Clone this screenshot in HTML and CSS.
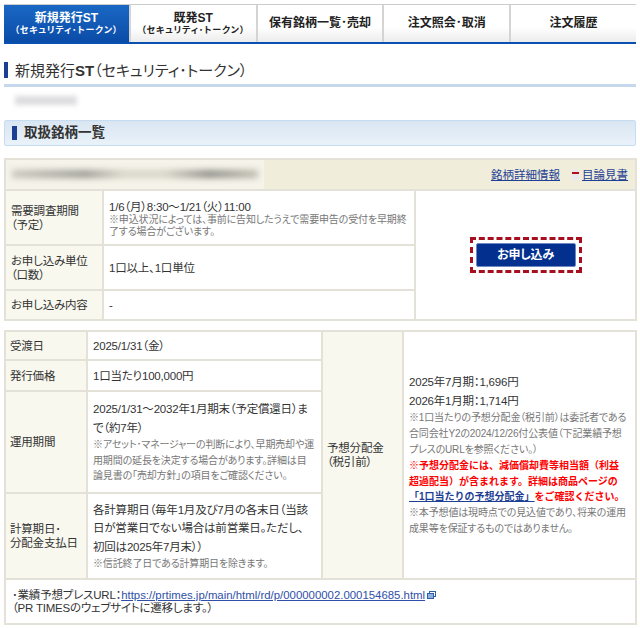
FILE: index.html
```html
<!DOCTYPE html>
<html lang="ja">
<head>
    <meta charset="UTF-8">
    <title>新規発行ST(セキュリティ・トークン)</title>
    <link rel="stylesheet" href="styles.css">
</head>
<body>
    <!-- Tabs -->
    <nav class="tabs">
        <a class="tab active" href="#"><span class="tab-main">新規発行ST</span><span class="tab-sub">（セキュリティ･トークン）</span></a>
        <a class="tab" href="#"><span class="tab-main">既発ST</span><span class="tab-sub">（セキュリティ･トークン）</span></a>
        <a class="tab" href="#"><span class="tab-main">保有銘柄一覧･売却</span></a>
        <a class="tab" href="#"><span class="tab-main">注文照会･取消</span></a>
        <a class="tab" href="#"><span class="tab-main">注文履歴</span></a>
    </nav>

    <h1 class="page-title">新規発行<b>ST</b>（セキュリティ･トークン）</h1>
    <div class="blur-line"><span class="smudge"></span></div>

    <h2 class="section-title">取扱銘柄一覧</h2>

    <!-- Issue table -->
    <table class="info issue">
        <colgroup>
            <col class="c-issue-label">
            <col class="c-issue-body">
            <col class="c-issue-apply">
        </colgroup>
        <tr class="issue-head">
            <td colspan="3">
                <div class="issue-head-row">
                    <div class="blur-name"><span class="smudge"></span></div>
                    <div class="issue-links">
                        <a href="#">銘柄詳細情報</a>
                        <span class="doc-icon"></span><a href="#">目論見書</a>
                    </div>
                </div>
            </td>
        </tr>
        <tr class="r-demand">
            <th>需要調査期間<br>（予定）</th>
            <td class="demand-body">1/6（月）8:30～1/21（火）11:00
                <p class="note">※申込状況によっては、事前に告知したうえで需要申告の受付を早期終<br>了する場合がございます。</p>
            </td>
            <td class="apply-cell" rowspan="3">
                <div class="apply-outline"><a class="apply-btn" href="#">お申し込み</a></div>
            </td>
        </tr>
        <tr class="r-unit">
            <th>お申し込み単位<br>（口数）</th>
            <td>1口以上、1口単位</td>
        </tr>
        <tr class="r-content">
            <th>お申し込み内容</th>
            <td>-</td>
        </tr>
    </table>

    <!-- Detail table -->
    <table class="info detail">
        <colgroup>
            <col class="c-label">
            <col class="c-body">
            <col class="c-forecast-label">
            <col class="c-forecast">
        </colgroup>
        <tr class="r-date">
            <th>受渡日</th>
            <td>2025/1/31（金）</td>
            <th class="forecast-head" rowspan="4">予想分配金<br>（税引前）</th>
            <td class="forecast" rowspan="4">
                <p class="forecast-value">2025年7月期：1,696円</p>
                <p class="forecast-value">2026年1月期：1,714円</p>
                <p class="note">※1口当たりの予想分配金（税引前）は委託者である<br>合同会社Y2の2024/12/26付公表値（下記業績予想<br>プレスのURLを参照ください。）</p>
                <p class="note warn">※予想分配金には、減価償却費等相当額（利益<br>超過配当）が含まれます。詳細は商品ページの<br><a href="#">「1口当たりの予想分配金」</a>をご確認ください。</p>
                <p class="note">※本予想値は現時点での見込値であり、将来の運用<br>成果等を保証するものではありません。</p>
            </td>
        </tr>
        <tr class="r-price">
            <th>発行価格</th>
            <td>1口当たり100,000円</td>
        </tr>
        <tr class="r-period">
            <th>運用期間</th>
            <td><div class="lined">2025/1/31～2032年1月期末（予定償還日）ま<br>で（約7年）</div>
                <p class="note">※アセット･マネージャーの判断により、早期売却や運<br>用期間の延長を決定する場合があります。詳細は目<br>論見書の「売却方針」の項目をご確認ください。</p>
            </td>
        </tr>
        <tr class="r-calc">
            <th>計算期日･<br>分配金支払日</th>
            <td><div class="lined">各計算期日（毎年1月及び7月の各末日（当該<br>日が営業日でない場合は前営業日。ただし、<br>初回は2025年7月末））</div>
                <p class="note">※信託終了日である計算期日を除きます。</p>
            </td>
        </tr>
        <tr class="r-press">
            <td colspan="4">･業績予想プレスURL：<a href="#">https://prtimes.jp/main/html/rd/p/000000002.000154685.html</a><svg class="ext-icon" width="9" height="8" viewBox="0 0 9 8"><rect x="2.5" y="0.5" width="6" height="5" fill="#fff" stroke="#2f5fa8"/><rect x="0.5" y="2.5" width="6" height="5" fill="#8fb0dc" stroke="#2f5fa8"/></svg><br>（PR TIMESのウェブサイトに遷移します。）</td>
        </tr>
    </table>
</body>
</html>
```

FILE: styles.css
```css
* {
    margin: 0;
    padding: 0;
    box-sizing: border-box;
}
body {
    font-family: 'Liberation Sans', 'Noto Sans CJK JP', sans-serif;
    font-feature-settings: "palt";
    font-size: 12px;
    line-height: 1.25;
    color: #333;
    background: #fff;
    padding: 4px 4px 0;
}
a {
    color: #1f3f94;
}

/* Tabs */
.tabs {
    display: flex;
    height: 40px;
    border-top: 1px solid #ccc;
    border-bottom: 2px solid #0a50b0;
}
.tab {
    flex: 1;
    display: flex;
    flex-direction: column;
    justify-content: center;
    align-items: center;
    text-decoration: none;
    color: #222;
    background: linear-gradient(#fff 60%, #ececec);
    border-right: 2px solid #d4d4d4;
}
.tab:last-child {
    border-right: none;
}
.tab.active {
    color: #fff;
    background: linear-gradient(#1a68c4, #0a4ca8);
}
.tab-main {
    font-size: 12px;
    font-weight: bold;
    line-height: 13px;
}
.tab-sub {
    font-size: 9px;
    font-weight: bold;
    line-height: 11px;
    letter-spacing: 0.8px;
}

/* Headings */
.page-title {
    margin-top: 18px;
    height: 25px;
    padding-left: 11px;
    font-size: 15px;
    font-weight: normal;
    line-height: 18px;
    color: #333;
    border-bottom: 3px solid #c4d8ee;
    position: relative;
}
.page-title::before {
    content: "";
    position: absolute;
    left: 0;
    top: 0;
    width: 4px;
    height: 16px;
    background: #1c3f94;
}
.blur-line {
    height: 33px;
    padding: 9px 0 0 11px;
}
.blur-line .smudge {
    display: block;
    width: 62px;
    height: 9px;
    background: #dcdce0;
    filter: blur(2.5px);
}
.section-title {
    height: 26px;
    padding-left: 19px;
    font-size: 13.5px;
    line-height: 23px;
    color: #333;
    background: linear-gradient(#d9e6f2, #eaf2f9);
    border: 1px solid #c6dcf0;
    border-radius: 2px;
    position: relative;
}
.section-title::before {
    content: "";
    position: absolute;
    left: 7px;
    top: 5px;
    width: 5px;
    height: 14px;
    background: #1c3f94;
}

/* Tables */
.info {
    width: 631px;
    table-layout: fixed;
    border-collapse: collapse;
    font-size: 11.5px;
    letter-spacing: -0.2px;
}
.info th,
.info td {
    border: 2px solid #e3e1d8;
    padding: 0 5px;
    vertical-align: middle;
    text-align: left;
    font-weight: normal;
    line-height: 14px;
}
.info th {
    background: #f8f8ef;
}
.note {
    font-size: 10px;
    line-height: 12.5px;
    letter-spacing: -0.15px;
    color: #777;
}
.issue {
    margin-top: 12px;
}
.c-issue-label {
    width: 98px;
}
.c-issue-body {
    width: 312px;
}
.c-issue-apply {
    width: 221px;
}
.issue-head td {
    height: 31px;
    padding: 0;
    background: #f0eddb;
}
.issue-head-row {
    display: flex;
    justify-content: space-between;
    align-items: center;
    height: 29px;
    padding-right: 7px;
}
.blur-name {
    width: 258px;
    height: 29px;
    background: #f6f4ea;
    padding: 10px 6px;
}
.blur-name .smudge {
    display: block;
    height: 8px;
    background: linear-gradient(90deg, #c8c6bc, #9c9b94 30%, #d6d4c8 45%, #d6d4c8 62%, #8f8e88 80%, #c0beb2);
    filter: blur(3px);
}
.issue-links {
    display: flex;
    align-items: center;
    font-size: 11.5px;
    letter-spacing: 0;
}
.doc-icon {
    width: 7px;
    height: 10px;
    margin: 0 3px 0 12px;
    background: linear-gradient(#e8e8f0 20%, #b40e1a 20%, #b40e1a 45%, #e8e8f0 45%);
}
.r-demand th,
.r-demand td {
    height: 55px;
}
.info .demand-body {
    padding-top: 3px;
}
.r-unit th,
.r-unit td {
    height: 45px;
}
.r-content th,
.r-content td {
    height: 30px;
}
.info .apply-cell {
    text-align: center;
}
.apply-outline {
    display: inline-block;
    padding: 3px;
    border: 3px dashed #a80f1e;
    vertical-align: middle;
}
.apply-btn {
    display: block;
    width: 100px;
    height: 24px;
    line-height: 22px;
    text-align: center;
    font-size: 12px;
    font-weight: bold;
    color: #fff;
    text-decoration: none;
    background: #03308f;
    border: 1px solid #6f88c4;
    border-radius: 2px;
}

/* Detail table */
.detail {
    margin-top: 9px;
}
.c-label {
    width: 82px;
}
.c-body {
    width: 235px;
}
.c-forecast-label {
    width: 81px;
}
.c-forecast {
    width: 233px;
}
.detail th {
    padding: 0 0 0 4px;
}
.r-date th,
.r-date td {
    height: 29px;
}
.r-price th,
.r-price td {
    height: 31px;
}
.r-period th,
.r-period td {
    height: 102px;
}
.r-calc th,
.r-calc td {
    height: 86px;
}
.r-press td {
    height: 45px;
    padding: 0 6px;
    line-height: 13px;
}
.r-press a {
    color: #2f4fa8;
    font-size: 11.4px;
    letter-spacing: 0;
}
.lined {
    line-height: 18.5px;
}
.r-period .note,
.r-calc .note {
    line-height: 15.5px;
}
.forecast-value {
    line-height: 18.5px;
}
.forecast .note {
    line-height: 15.8px;
}
.forecast .warn {
    color: #f00;
    font-weight: bold;
    font-feature-settings: normal;
    letter-spacing: 0;
}
.warn a {
    color: #1f3f94;
}
.ext-icon {
    margin-left: 2px;
}
```
